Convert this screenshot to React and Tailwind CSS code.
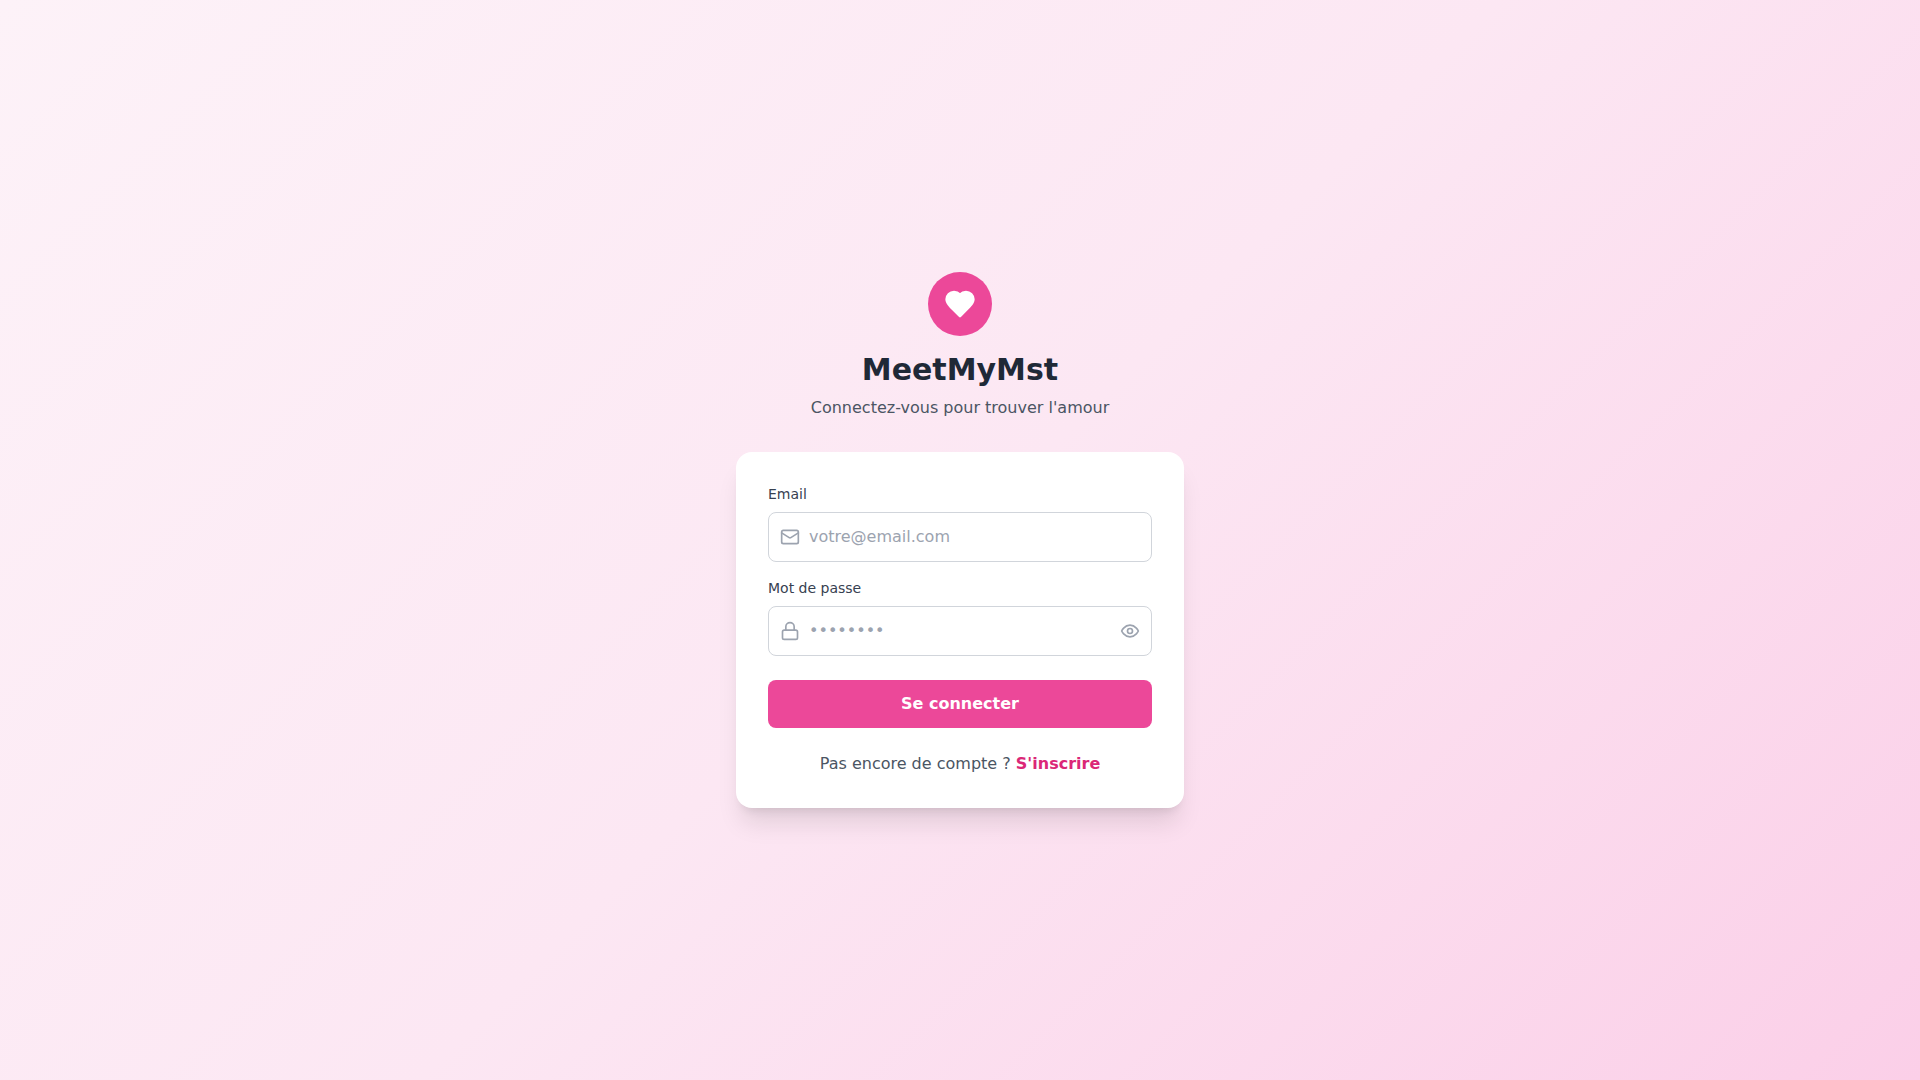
import { useState } from "react";
import { Mail, Lock, EyeOff } from "lucide-react";

function HeartIcon({ className }) {
  return (
    <svg viewBox="0 0 24 24" fill="white" stroke="currentColor" strokeWidth="2" strokeLinecap="round" strokeLinejoin="round" className={className} aria-hidden="true">
      <path d="M19 14c1.49-1.46 3-3.21 3-5.5A5.5 5.5 0 0 0 16.5 3c-1.76 0-3 .5-4.5 2-1.5-1.5-2.74-2-4.5-2A5.5 5.5 0 0 0 2 8.5c0 2.3 1.5 4.05 3 5.5l7 7Z" />
    </svg>
  );
}

function EyeIcon({ className }) {
  return (
    <svg viewBox="0 0 24 24" fill="none" stroke="currentColor" strokeWidth="2" strokeLinecap="round" strokeLinejoin="round" className={className} aria-hidden="true">
      <path d="M2 12s3-7 10-7 10 7 10 7-3 7-10 7-10-7-10-7Z" />
      <circle cx="12" cy="12" r="3" />
    </svg>
  );
}

export default function App() {
  const [visible, setVisible] = useState(false);

  return (
    <main className="min-h-screen bg-[linear-gradient(135deg,#fdf2f8_0%,#fce7f3_50%,#fbcfe8_100%)] flex items-center justify-center p-4 font-['DejaVu_Sans',sans-serif]">
      <div className="w-full max-w-md">
        <header className="text-center mb-8">
          <div className="inline-flex items-center justify-center size-16 bg-[#ec4899] rounded-full mb-4">
            <HeartIcon className="size-8 text-white" />
          </div>
          <h1 className="text-3xl font-bold text-[#1f2937]">MeetMyMst</h1>
          <p className="text-[#4b5563] mt-2">Connectez-vous pour trouver l'amour</p>
        </header>

        <div className="bg-white rounded-2xl shadow-xl p-8">
          <form onSubmit={(e) => e.preventDefault()}>
            <div className="mb-4">
              <label htmlFor="email" className="block text-sm font-medium text-[#374151] mb-2">Email</label>
              <div className="relative">
                <Mail className="absolute left-3 top-1/2 -translate-y-1/2 size-5 text-[#9ca3af]" />
                <input
                  id="email"
                  type="email"
                  placeholder="votre@email.com"
                  className="w-full pl-10 pr-4 py-3 border border-[#d1d5db] rounded-lg placeholder:text-[#9ca3af]"
                />
              </div>
            </div>
            <div className="mb-6">
              <label htmlFor="password" className="block text-sm font-medium text-[#374151] mb-2">Mot de passe</label>
              <div className="relative">
                <Lock className="absolute left-3 top-1/2 -translate-y-1/2 size-5 text-[#9ca3af]" />
                <input
                  id="password"
                  type={visible ? "text" : "password"}
                  placeholder="••••••••"
                  className="w-full pl-10 pr-12 py-3 border border-[#d1d5db] rounded-lg placeholder:text-[#9ca3af]"
                />
                <button
                  type="button"
                  aria-label="Afficher le mot de passe"
                  onClick={() => setVisible(!visible)}
                  className="absolute right-3 top-1/2 -translate-y-1/2 text-[#9ca3af]"
                >
                  {visible ? <EyeOff className="size-5" /> : <EyeIcon className="size-5" />}
                </button>
              </div>
            </div>
            <button type="submit" className="w-full bg-[#ec4899] text-white py-3 rounded-lg font-semibold">
              Se connecter
            </button>
          </form>
          <p className="mt-6 text-center text-[#4b5563]">
            Pas encore de compte ?{" "}
            <a href="#inscription" className="text-[#db2777] font-semibold">S'inscrire</a>
          </p>
        </div>
      </div>
    </main>
  );
}
